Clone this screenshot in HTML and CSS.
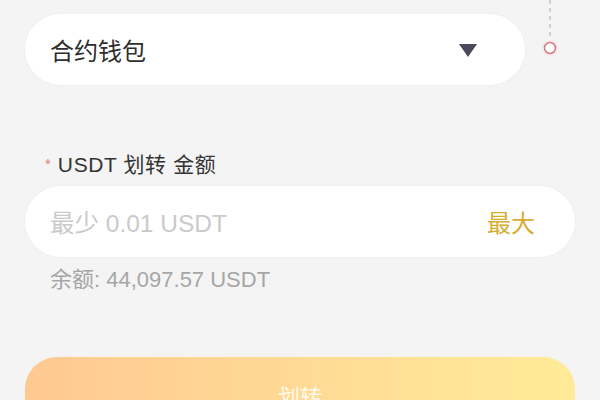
FILE: index.html
```html
<!DOCTYPE html>
<html lang="zh-CN">
<head>
    <meta charset="UTF-8">
    <meta name="viewport" content="width=device-width, initial-scale=1.0">
    <title>USDT 划转</title>
    <link rel="stylesheet" href="styles.css">
</head>
<body>

    <div class="form">
        <!-- Wallet selector with step indicator -->
        <div class="top-row">
            <div class="field">
                <div class="label"><span class="req">*</span> 转入钱包</div>
                <div class="select">
                    <span>合约钱包</span>
                    <span class="caret"></span>
                </div>
            </div>
            <div class="steps">
                <svg width="24" height="60" viewBox="0 0 24 60">
                    <line x1="12" y1="0" x2="12" y2="36" stroke="#b8b8b8" stroke-width="1.2" stroke-dasharray="4 4"/>
                    <circle cx="12" cy="48" r="8" fill="#fbe4e4" opacity="0.7"/>
                    <circle cx="12" cy="48" r="5.5" fill="#fff" stroke="#d07a80" stroke-width="1.5"/>
                </svg>
            </div>
        </div>

        <!-- Amount -->
        <div class="label amount-label"><span class="req">*</span> USDT 划转 金额</div>
        <div class="input">
            <span class="placeholder">最少 0.01 USDT</span>
            <span class="max">最大</span>
        </div>
        <div class="balance">余额: 44,097.57 USDT</div>

        <button class="submit">划转</button>
    </div>

</body>
</html>
```

FILE: styles.css
```css
body {
    margin: 0;
    background-color: #f4f4f4;
    font-family: "Liberation Sans", "Noto Sans CJK SC", sans-serif;
    color: #333;
    overflow: hidden;
}
.form {
    padding: 0 25px;
}
.top-row {
    display: flex;
    margin-top: -23px;
}
.field {
    width: 500px;
}
.label {
    font-size: 21px;
    line-height: 24px;
    height: 24px;
    padding-left: 20px;
    color: #333;
    letter-spacing: 0.6px;
}
.select {
    margin-top: 13px;
    height: 71px;
    border-radius: 36px;
    background-color: #fff;
    box-shadow: 0 0 3px rgba(0, 0, 0, 0.04);
    display: flex;
    align-items: center;
    justify-content: space-between;
    padding: 0 48px 0 25px;
    font-size: 24px;
    color: #2e2e2e;
}
.caret {
    width: 0;
    height: 0;
    border-left: 9px solid transparent;
    border-right: 9px solid transparent;
    border-top: 13px solid #4b4a5c;
    margin-top: 2px;
}
.steps {
    width: 50px;
    display: flex;
    justify-content: center;
    padding-top: 23px;
}

.amount-label {
    margin-top: 67px;
}
.req {
    color: #e07a7a;
    font-size: 15px;
    vertical-align: 3px;
}
.input {
    margin-top: 10px;
    height: 71px;
    border-radius: 36px;
    background-color: #fff;
    box-shadow: 0 0 3px rgba(0, 0, 0, 0.04);
    display: flex;
    align-items: center;
    justify-content: space-between;
    padding: 0 40px 0 25px;
}
.placeholder {
    font-size: 24.5px;
    color: #cacaca;
}
.max {
    font-size: 24px;
    color: #d6ad2e;
}
.balance {
    margin-top: 10px;
    padding-left: 25px;
    font-size: 22px;
    line-height: 26px;
    color: #a6a6a6;
}

.submit {
    display: block;
    width: 100%;
    margin-top: 64px;
    height: 72px;
    border: none;
    border-radius: 32px;
    background: linear-gradient(to right, #ffc992, #ffeb97);
    color: rgba(255, 255, 255, 0.85);
    font-family: inherit;
    font-size: 22px;
    padding-top: 4px;
}
```
